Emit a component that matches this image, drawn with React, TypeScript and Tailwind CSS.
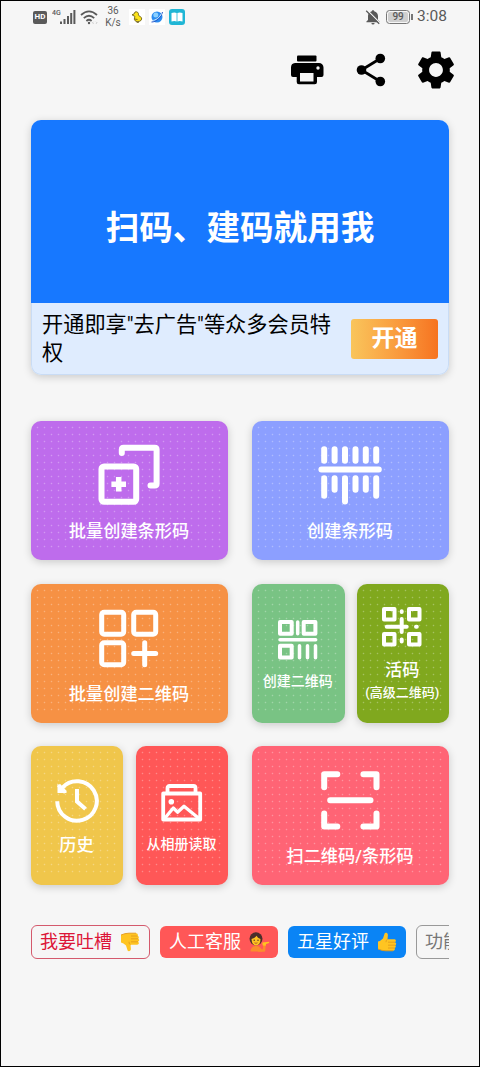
import type { ReactNode } from 'react';
import { MdSettings } from 'react-icons/md';

interface TileProps {
  color: string;
  children: ReactNode;
}

function Tile({ color, children }: TileProps) {
  return (
    <button className={`h-[139px] min-w-0 rounded-[10px] pt-[3px] pr-1 pb-[10px] pl-[3px] text-white shadow-[0_2px_8px_rgba(0,0,0,0.18)] ${color}`}>
      <div className="flex h-[126px] flex-col items-center bg-[radial-gradient(circle,rgba(255,255,255,0.3)_0.6px,transparent_1.1px)] bg-[size:7px_7px]">
        {children}
      </div>
    </button>
  );
}

function BigTile({ color, label, children }: TileProps & { label: string }) {
  return (
    <Tile color={color}>
      <svg viewBox="0 0 64 64" className="mt-[19px] h-16 w-16 shrink-0" fill="none" stroke="currentColor" strokeWidth="6" strokeLinecap="round" strokeLinejoin="round">
        {children}
      </svg>
      <span className="mt-[11px] text-[17.2px] leading-[26px] font-medium whitespace-nowrap">{label}</span>
    </Tile>
  );
}

function StatusBar() {
  return (
    <div className="flex h-8 items-center justify-between pr-8 pl-8 font-[Roboto,sans-serif] text-[#5a5a5a]">
      <div className="flex items-center">
        <span className="flex h-[13px] w-[14px] items-center justify-center rounded-[2px] bg-[#5a5a5a] text-[8px] font-bold text-white">HD</span>
        <svg viewBox="0 0 24 16" className="ml-[5px] h-4 w-6" fill="currentColor">
          <text x="0" y="6" fontSize="7" fontWeight="500">4G</text>
          <rect x="8" y="12.5" width="2" height="2.5" />
          <rect x="11.5" y="10" width="2" height="5" />
          <rect x="15" y="7" width="2" height="8" />
          <rect x="18.2" y="4" width="2" height="11" />
          <rect x="21.4" y="1" width="2" height="14" />
        </svg>
        <svg viewBox="0 0 18 16" className="ml-[4px] h-4 w-[18px]" fill="none" stroke="currentColor" strokeWidth="1.8">
          <path d="M1 6Q9-1.2 17 6M3.8 9.2Q9 4.2 14.2 9.2M6.4 12Q9 9.6 11.6 12" />
          <circle cx="9" cy="14" r="1.2" fill="currentColor" stroke="none" />
          <path d="M13.5 12.8l-1 1 1 1M16 12.8l1 1-1 1" stroke="#bbb" strokeWidth="0.8" />
        </svg>
        <span className="ml-[7px] w-[16px] text-center text-[10px] leading-[12px]">
          36
          <br />
          K/s
        </span>
        <span className="ml-[8px] flex h-4 w-4 items-center justify-center bg-white">
          <svg viewBox="0 0 12 12" className="h-3 w-3" fill="#fbe21b" stroke="#5e520f" strokeWidth="0.8">
            <path d="M4 1c2-.8 4 .6 3.4 3-.3 1 3.8 1.600 3.300 4C10.200 10.500 7 11 5 10.300 3 9.500 3 7.500 4 5.500L1 3.800 3 3z" />
            <path d="M3.500 8l3 .5M6 10.500v1.200h2" fill="none" />
          </svg>
        </span>
        <span className="ml-[4px] flex h-4 w-4 items-center justify-center bg-white">
          <svg viewBox="0 0 14 14" className="h-[14px] w-[14px]">
            <circle cx="7" cy="7" r="5.500" fill="#2b8cf0" />
            <circle cx="5.800" cy="5" r="2.500" fill="#8ad0ff" />
            <path d="M1.500 12C6 12 11 8 12.500 2" fill="none" stroke="#2456c8" strokeWidth="1" />
            <path d="M2 10.500C6 10.500 9.500 7.500 11.500 3.500" fill="none" stroke="#d9efff" strokeWidth="1" />
          </svg>
        </span>
        <svg viewBox="0 0 16 16" className="ml-[4px] h-4 w-4">
          <rect width="16" height="16" rx="3" fill="#20b6d5" />
          <path d="M2.500 4Q5.500 2.800 7.600 4v8.500Q5.500 11.500 2.500 12.500zM13.500 4Q10.500 2.800 8.400 4v8.500q2.100-1 5.100 0z" fill="white" />
        </svg>
      </div>
      <div className="flex items-center">
        <svg viewBox="0 0 16 16" className="h-4 w-4">
          <path d="M8 1.200c.8 0 1.200.5 1.200 1.100C11.600 3 13 4.800 13 7v4l1.600 1.600v.6H1.400v-.6L3 11V7c0-2.200 1.400-4 3.800-4.700 0-.6.400-1.100 1.200-1.100zM6.400 14h3.200a1.600 1.600 0 0 1-3.200 0z" fill="currentColor" />
          <path d="M2.200 1.200l13 13" stroke="#f6f6f6" strokeWidth="1.400" />
          <path d="M1.200 1.800l13 13" stroke="currentColor" strokeWidth="1.300" />
        </svg>
        <span className="ml-[5px] flex h-[14px] w-6 items-center justify-center rounded-[3.500px] border border-[#777] p-px">
          <span className="flex h-full w-full items-center justify-center rounded-[2px] bg-[#cfcfcf] text-[10px] leading-none font-medium">99</span>
        </span>
        <span className="ml-px h-[6px] w-[2px] bg-[#777]" />
        <span className="ml-[4px] text-[15.500px] leading-none">3:08</span>
      </div>
    </div>
  );
}

function Toolbar() {
  return (
    <div className="flex h-[73px] items-center justify-end pr-[20px]">
      <svg viewBox="0 0 34 32" className="mr-[31px] h-8 w-[34px]">
        <rect x="7" y="1.500" width="19.500" height="6" rx="1" />
        <path d="M5 9h24a4.500 4.500 0 0 1 4.500 4.500V21q0 2-2 2H27v5q0 2.200-2.200 2.200H8.900Q6.700 30.200 6.700 28v-5H3q-2 0-2-2v-7.500A4.500 4.500 0 0 1 5 9z" />
        <rect x="10" y="19" width="13.500" height="8.500" fill="#f6f6f6" />
        <circle cx="28" cy="14" r="1.700" fill="#f6f6f6" />
      </svg>
      <svg viewBox="0 0 32 34" className="mr-[26px] h-[34px] w-8">
        <path d="M25.300 5.500L6.500 17l18.800 11.500" fill="none" stroke="black" strokeWidth="2.800" />
        <circle cx="25.300" cy="5.500" r="4.800" />
        <circle cx="6.500" cy="17" r="4.800" />
        <circle cx="25.300" cy="28.500" r="4.800" />
      </svg>
      <MdSettings className="h-[46px] w-[46px] text-black" />
    </div>
  );
}

function ThumbUp({ className }: { className: string }) {
  return (
    <svg viewBox="0 0 20 20" className={className}>
      <path d="M1 9.500Q3.500 9 6 6.500L7.600 1.600C8 .3 10.900.4 10.900 2.900L10.500 7.300h6.700c2 0 2.200 2.300.8 2.900 1.700.5 1.500 2.700.2 3 1.100.8.700 2.600-.6 2.700.8 1.100.1 2.800-1.500 2.800H9Q5 18.800 1 17z" fill="#ffc421" />
      <path d="M11 10.200h7M11 13.200h7.200M11 16h6.600M10.500 7.300Q8.800 8 9 10.200" fill="none" stroke="#df981c" strokeWidth="0.800" />
      <path d="M1 17q4 1.800 8 1.800h7" fill="none" stroke="#e49a18" strokeWidth="0.900" />
    </svg>
  );
}

function TippingHand() {
  return (
    <svg viewBox="0 0 22 20" className="h-5 w-[22px]">
      <path d="M2.500 19.500q0-5 5-5.500 6 0 6.500 5.500z" fill="#fb8c2d" />
      <circle cx="8" cy="6.800" r="6.500" fill="#4b2e2b" />
      <path d="M3.500 7Q7 6 8.500 3.800 9.500 6 12.500 7q0 6-4.500 6.500Q3.800 13 3.500 7z" fill="#ffc321" />
      <circle cx="6.200" cy="8.200" r=".7" fill="#4b2e2b" />
      <circle cx="10" cy="8.200" r=".7" fill="#4b2e2b" />
      <path d="M6.500 10.800q1.500 1 3 0" fill="none" stroke="#9c442c" strokeWidth=".8" />
      <path d="M10 18.500h6L16.500 12" fill="none" stroke="#fb8c2d" strokeWidth="2.600" strokeLinejoin="round" />
      <path d="M14.200 10.500l7-.8-.1 1.400-3 .8-.5 1.800-2.800-.2z" fill="#ffc321" />
    </svg>
  );
}

export default function App() {
  return (
    <div className="h-[1067px] w-[480px] overflow-hidden border border-black bg-[#f6f6f6] font-[Roboto,'Noto_Sans_CJK_SC',sans-serif]">
      <StatusBar />
      <Toolbar />

      <main className="px-[30px] pt-[14px]">
        {/* 会员横幅 */}
        <section className="overflow-hidden rounded-[10px] bg-[#dfecfe] shadow-[0_2px_8px_rgba(0,0,0,0.18)]">
          <div className="flex h-[183px] items-center justify-center bg-[#1778ff] pt-[34px]">
            <h1 className="text-[33.600px] leading-none font-bold whitespace-nowrap text-white">扫码、建码就用我</h1>
          </div>
          <div className="flex h-[72px] items-center justify-between rounded-b-[10px] border border-t-0 border-[#c9dcf5] pr-[10px] pl-[10px]">
            <p className="w-[300px] text-[21.200px] leading-7 text-black">开通即享"去广告"等众多会员特权</p>
            <button className="h-10 w-[87px] rounded-[3px] bg-linear-to-r from-[#f9c55b] to-[#f6731f] text-[23px] leading-none font-bold text-white">开通</button>
          </div>
        </section>

        {/* 功能入口 */}
        <section className="mt-[46px] grid grid-cols-2 gap-x-6 gap-y-[23.500px]">
          <BigTile color="bg-[#be6cec]" label="批量创建条形码">
            <path d="M24.800 10V6.500q0-1.800 1.800-1.800h31.200q1.800 0 1.800 1.800v34.200q0 1.800-1.800 1.800H53.500" />
            <rect x="4.500" y="23.500" width="34.700" height="35.300" rx="2.500" />
            <path d="M21.700 34v14.600M14.400 41.300H29" strokeWidth="5.500" strokeLinecap="butt" />
          </BigTile>
          <BigTile color="bg-[#8c9fff]" label="创建条形码">
            <path d="M6.200 6.200v11.600M16.600 6.200v11.600M27 6.200v11.600M37.500 6.200v11.600M47.800 6.200v11.600M58.200 6.200v11.600M3.400 26.500h57.400M6.200 35.200v17.600M16.600 35.200v11.600M27 35.200v23.200M37.500 35.200v11.600M47.800 35.200v11.600M58.200 35.200v17.600" />
          </BigTile>

          <BigTile color="bg-[#f69144]" label="批量创建二维码">
            <g strokeWidth="5">
              <rect x="4.700" y="6.200" width="22" height="22" rx="2.500" />
              <rect x="36.700" y="6.200" width="22" height="22" rx="2.500" />
              <rect x="4.700" y="36.800" width="22" height="22" rx="2.500" />
              <path d="M36.700 47.500h22M47.700 36.700v22" />
            </g>
          </BigTile>
          <div className="grid grid-cols-2 gap-x-3">
            <Tile color="bg-[#79c384]">
              <svg viewBox="0 0 40 40" className="mt-[33.500px] h-10 w-10 shrink-0" fill="none" stroke="currentColor" strokeWidth="4" strokeLinejoin="round" strokeLinecap="round">
                <rect x="2" y="2" width="11.700" height="11.700" />
                <rect x="25.700" y="2" width="11.700" height="11.700" />
                <rect x="2" y="25.700" width="11.700" height="11.700" />
                <path d="M19.700 2v11.700M2 19.700h35.700M21.500 25.700v12M29.500 25.700v12M37.500 25.700v12" strokeWidth="3.500" />
              </svg>
              <span className="mt-[11px] text-[14px] leading-5 font-medium whitespace-nowrap">创建二维码</span>
            </Tile>
            <Tile color="bg-[#80a81e]">
              <svg viewBox="0 0 40 40" className="mt-[20.500px] h-10 w-10 shrink-0" fill="none" stroke="currentColor" strokeWidth="4" strokeLinejoin="round" strokeLinecap="round">
                <rect x="2" y="2" width="10.500" height="10.500" />
                <rect x="27" y="2" width="10.500" height="10.500" />
                <rect x="2" y="27" width="10.500" height="10.500" />
                <rect x="27" y="27" width="10.500" height="10.500" />
                <path d="M19.700 4.300v.6M19.700 12v13M4.700 19.700h20M34 19.700h.8M19.700 32.500v2" />
              </svg>
              <span className="mt-[10px] text-[17.200px] leading-[26px] font-medium whitespace-nowrap">活码</span>
              <span className="text-[13px] leading-5 font-medium whitespace-nowrap">(高级二维码)</span>
            </Tile>
          </div>

          <div className="grid grid-cols-2 gap-x-[13px]">
            <Tile color="bg-[#f0c64b]">
              <svg viewBox="0 0 44 44" className="mt-[29.500px] h-11 w-11 shrink-0" fill="none" stroke="currentColor" strokeWidth="4">
                <path d="M2.200 22.200A19.800 19.800 0 1 0 7.200 8.800" />
                <path d="M2.500 4.500v9.500h9.500z" fill="currentColor" stroke="none" />
                <path d="M3.500 6l7 7.500" />
                <path d="M22 10v12.500l8.500 7.500" />
              </svg>
              <span className="mt-[9px] text-[17.200px] leading-[26px] font-medium whitespace-nowrap">历史</span>
            </Tile>
            <Tile color="bg-[#ff5757]">
              <svg viewBox="0 0 42 40" className="mt-[33.500px] h-10 w-[42px] shrink-0" fill="none" stroke="currentColor" strokeWidth="3.800" strokeLinejoin="round">
                <path d="M6.500 9V5q0-2 2-2h24q2 0 2 2v4" />
                <rect x="2.200" y="10.500" width="37" height="26" />
                <path d="M4 35l8.300-10 4.200 4.200 6.500-6L38 35.500" strokeWidth="3.300" />
                <circle cx="10.300" cy="18.700" r="2.800" fill="currentColor" stroke="none" />
              </svg>
              <span className="mt-[11px] text-[14px] leading-5 font-medium whitespace-nowrap">从相册读取</span>
            </Tile>
          </div>
          <BigTile color="bg-[#ff6475]" label="扫二维码/条形码">
            <path d="M6.200 19.300V6.200h13.100M45.400 6.200h13.100v13.100M58.500 45.400v13.100H45.400M19.300 58.500H6.200V45.400M12.200 32.200h40.300" />
          </BigTile>
        </section>

        {/* 底部标签 */}
        <section className="mt-[39.500px] flex gap-[10px] overflow-hidden text-[18px] leading-none">
          <button className="flex h-[34px] w-[119px] shrink-0 items-center justify-between rounded-[6px] border border-[#d45a6d] pr-[9px] pl-2 text-[#dc1537]">
            我要吐槽
            <ThumbUp className="h-5 w-5 -scale-y-100" />
          </button>
          <button className="flex h-8 w-[118px] shrink-0 items-center justify-between self-center rounded-[6px] bg-[#ff5757] pr-[8px] pl-[9px] text-white">
            人工客服
            <TippingHand />
          </button>
          <button className="flex h-8 w-[118px] shrink-0 items-center justify-between self-center rounded-[6px] bg-[#0a84f5] pr-[9px] pl-[9px] text-white">
            五星好评
            <ThumbUp className="h-5 w-5" />
          </button>
          <button className="flex h-[34px] w-[119px] shrink-0 items-center rounded-[6px] border border-[#999] pl-2 text-[#777]">功能建议</button>
        </section>
      </main>
    </div>
  );
}
